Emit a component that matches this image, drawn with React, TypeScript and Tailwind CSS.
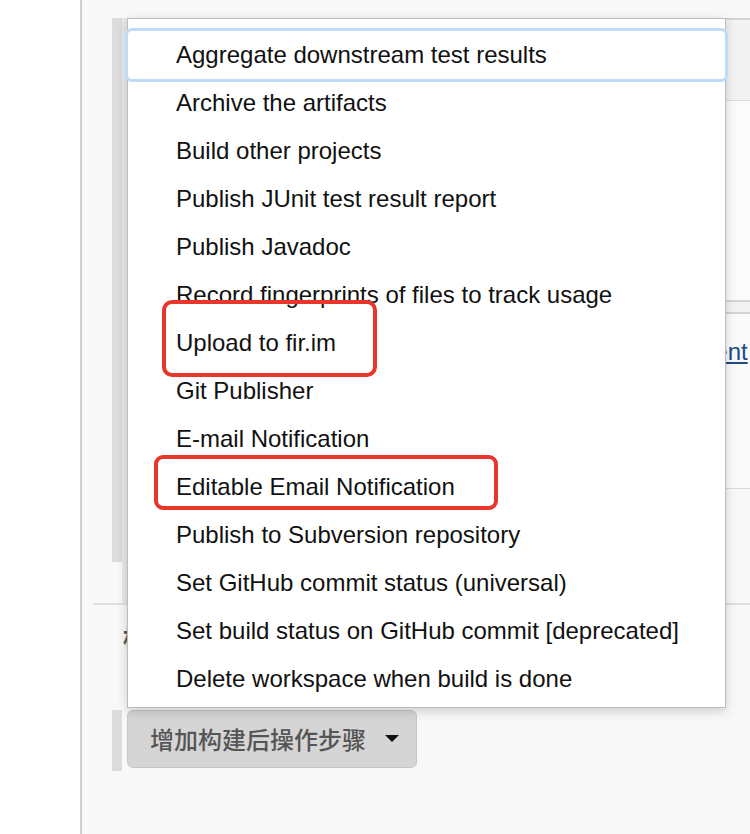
import React from 'react';

const items = [
  'Aggregate downstream test results',
  'Archive the artifacts',
  'Build other projects',
  'Publish JUnit test result report',
  'Publish Javadoc',
  'Record fingerprints of files to track usage',
  'Upload to fir.im',
  'Git Publisher',
  'E-mail Notification',
  'Editable Email Notification',
  'Publish to Subversion repository',
  'Set GitHub commit status (universal)',
  'Set build status on GitHub commit [deprecated]',
  'Delete workspace when build is done',
];

function Caret() {
  return (
    <svg width="14" height="8" viewBox="0 0 14 8" className="ml-[19px]">
      <path d="M0 0 L14 0 L7 7 Z" fill="#111" />
    </svg>
  );
}

export default function App() {
  return (
    <div
      className="relative w-[750px] h-[834px] overflow-hidden bg-white flex"
      style={{ fontFamily: '"Liberation Sans", Arial, "Noto Sans CJK SC", sans-serif' }}
    >
      {/* left gutter */}
      <div className="w-[80px] shrink-0 bg-white" />

      {/* page body behind the dropdown */}
      <div className="flex-1 border-l-2 border-[#cfcfcf] bg-[#f8f8f8] pt-[18px] flex flex-col">
        <div className="flex h-[585px]">
          <div className="ml-[30px] w-[10px] h-[544px] bg-[#dcdcdc]" />
          <div className="flex-1 flex flex-col border-l-[5px] border-[#e9e9e9]">
            <div className="h-[82px] border-t-2 border-[#d2d2d2] bg-[#f3f3f3]" />
            <div className="h-[200px] border-t border-[#dadada] bg-[#fbfbfb]" />
            <div className="h-[12px] border-t-2 border-[#d4d4d4] bg-[#f3f3f3]" />
            <div className="h-[176px] border-t-2 border-[#d4d4d4] bg-[#fafafa] pt-[20px]">
              <span className="ml-[486px] text-[24px] text-[#204a87] underline whitespace-nowrap">
                Environment
              </span>
            </div>
            <div className="flex-1 border-t border-[#dcdcdc] bg-[#f8f8f8]" />
          </div>
        </div>
        <div className="ml-[11px] border-t-2 border-[#dedede]" />
        <div className="h-[105px] pt-[14px] pl-[41px]">
          <span
            className="text-[24px] font-bold text-[#555]"
            style={{ fontFamily: '"Noto Sans CJK SC", sans-serif' }}
          >
            构建后操作
          </span>
        </div>
        <div className="flex items-start">
          <div className="ml-[30px] w-[10px] h-[61px] bg-[#dcdcdc]" />
          <button
            type="button"
            className="ml-[5px] h-[58px] w-[290px] flex items-center pl-[22px] rounded-[6px] border border-[#c6c6c6] bg-[#d5d5d5] text-[24px] font-medium text-[#555]"
            style={{ fontFamily: '"Noto Sans CJK SC", sans-serif' }}
          >
            增加构建后操作步骤
            <Caret />
          </button>
        </div>
      </div>

      {/* dropdown menu */}
      <div className="absolute left-[127px] top-[18px] w-[599px] h-[690px] bg-white border border-[#bdbdbd] shadow-[0_3px_10px_rgba(0,0,0,0.18)] pt-[12px]">
        {items.map((label, i) => (
          <div
            key={label}
            className={
              i === 0
                ? 'relative h-[48px] flex items-center pl-[48px] text-[24px] text-[#111] rounded-[4px] shadow-[0_0_0_3px_#bedcf8]'
                : 'h-[48px] flex items-center pl-[48px] text-[24px] text-[#111]'
            }
          >
            {label}
          </div>
        ))}
      </div>

      {/* red annotation boxes */}
      <div className="absolute left-[162px] top-[300px] w-[215px] h-[77px] rounded-[10px] border-4 border-[#e8362b]" />
      <div className="absolute left-[154px] top-[455px] w-[344px] h-[55px] rounded-[9px] border-4 border-[#e8362b]" />
    </div>
  );
}
